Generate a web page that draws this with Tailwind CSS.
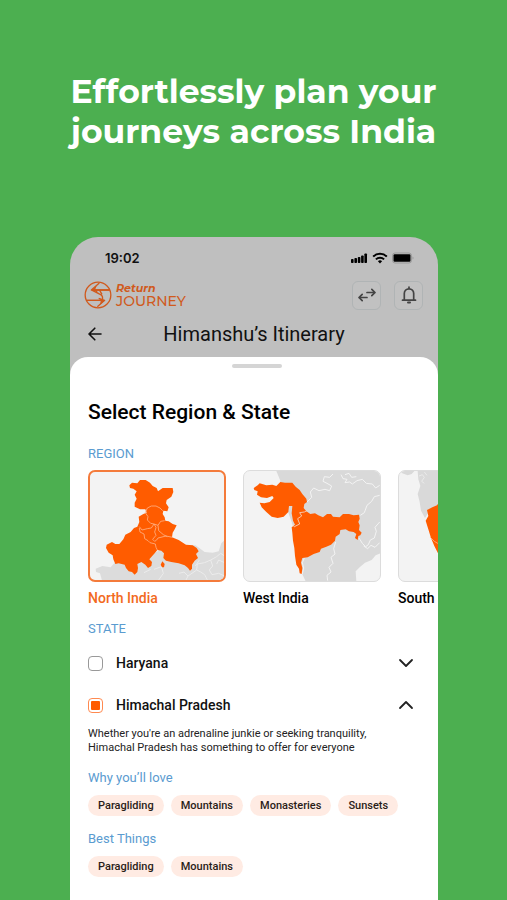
<!DOCTYPE html>
<html lang="en">
<head>
<meta charset="utf-8">
<meta name="viewport" content="width=device-width, initial-scale=1">
<title>Return Journey</title>
<script src="https://cdn.jsdelivr.net/npm/@tailwindcss/browser@4"></script>
</head>
<body class="bg-[#4caf50]">
<main class="flex h-screen min-h-[900px] flex-col overflow-hidden bg-[#4caf50] font-[Roboto,sans-serif] text-[#111]">
  <h1 class="pt-[71px] text-center font-[Montserrat,Inter,sans-serif] text-[33px] leading-10 font-bold text-white">Effortlessly plan your<br>journeys across India</h1>

  <section class="mr-[69px] ml-[70px] mt-[86px] flex flex-1 flex-col overflow-hidden rounded-t-[28px] bg-[#bfbfbf]">
    <div class="flex h-[42px] items-center justify-between pr-6 pl-[35px]">
      <time class="font-[Inter,sans-serif] text-[13px] leading-5 font-semibold">19:02</time>
      <div class="flex items-center gap-1">
        <svg class="h-3 w-[17px]" viewBox="0 0 17 12" aria-hidden="true"><rect x="0" y="7" width="2.6" height="4" rx=".8"/><rect x="3.4" y="6" width="2.6" height="5" rx=".8"/><rect x="6.8" y="5" width="2.6" height="6" rx=".8"/><rect x="10.1" y="3.5" width="2.6" height="7.5" rx=".8"/><rect x="13.4" y="1.5" width="2.6" height="9.5" rx=".8"/></svg>
        <svg class="h-3 w-4" viewBox="0 0 16 12" aria-hidden="true" fill="none" stroke="#000" stroke-width="2"><path d="M1.2 4.600a9.700 9.700 0 0 1 13.600 0M3.900 7.400a5.900 5.900 0 0 1 8.200 0"/><path d="M5.900 9.300a3.100 3.100 0 0 1 4.200 0L8 11.500z" fill="#000" stroke="none"/></svg>
        <svg class="h-3 w-[22px]" viewBox="0 0 22 12" aria-hidden="true"><rect x=".5" y="1" width="19" height="10" rx="2.600" fill="none" stroke="#999"/><rect x="1.500" y="2.300" width="17" height="7.400" rx="1.200"/><path d="M20.500 4.500v3q1-.4 1-1.500t-1-1.500" fill="#999"/></svg>
      </div>
    </div>

    <header class="flex h-8 items-center pr-[15px] pl-[14px]">
      <a href="#" aria-label="Return Journey" class="flex items-center gap-1 text-[#d05a1d]">
        <svg class="size-7" viewBox="0 0 84 84" fill="none" stroke="currentColor" stroke-width="4" stroke-linejoin="round" aria-hidden="true"><circle cx="42" cy="42" r="38.500"/><path d="M77 27H22L46 6M22 27L50 41Q58 46 55 57M7 58H62L40 77M62 58L44 52M47 28L54 40"/><path d="M22 27L38 14L34 25H77V29H38L44 36zM62 59L48 71L50 60H7V56H50L44 51z" fill="currentColor" stroke="none"/></svg>
        <span class="flex flex-col font-[Montserrat,sans-serif]"><span class="text-[11px] leading-[11px] font-bold italic">Return</span><span class="text-[14px] leading-[14px] font-medium">JOURNEY</span></span>
      </a>
      <div class="ml-auto flex gap-[13px] text-[#444]">
        <button type="button" aria-label="Swap" class="grid size-[29px] place-items-center rounded-md border border-[#b0b4b5] bg-[#c1c1c1]"><svg class="h-5 w-5" viewBox="0 0 20 20" fill="none" stroke="currentColor" stroke-width="1.700" stroke-linecap="round" stroke-linejoin="round" aria-hidden="true"><path d="M10 7.500h8M14.800 4.300L18 7.500L14.800 10.700M10 12.500H2M5.200 9.300L2 12.500L5.200 15.700"/></svg></button>
        <button type="button" aria-label="Notifications" class="grid size-[29px] place-items-center rounded-md border border-[#b0b4b5] bg-[#c1c1c1]"><svg class="h-5 w-5" viewBox="0 0 20 20" fill="none" stroke="currentColor" stroke-width="1.700" stroke-linecap="round" stroke-linejoin="round" aria-hidden="true"><path d="M3.500 15.200h13M5.300 15V8.500a4.700 4.700 0 0 1 9.400 0V15M10 3.500V2"/><path d="M9 17.500h2" stroke-width="2"/></svg></button>
      </div>
    </header>

    <div class="grid h-[46px] grid-cols-[1fr_auto_1fr] items-center pl-[18px] pr-[18px]">
      <button type="button" aria-label="Back"><svg class="h-4 w-[14px]" viewBox="0 0 14 16" fill="none" stroke="#111" stroke-width="1.600" stroke-linecap="round" stroke-linejoin="round" aria-hidden="true"><path d="M13 8H1.200M6.800 2.200L1 8L6.800 13.800"/></svg></button>
      <h2 class="text-[20px] leading-6">Himanshu’s Itinerary</h2>
    </div>

    <div class="flex flex-1 flex-col rounded-t-[18px] bg-white pt-[7px] pl-[18px]">
      <div class="-ml-3 flex justify-center"><span class="h-1 w-[50px] rounded-full bg-[#d5d5d5]"></span></div>
      <h3 class="mt-[30px] text-[21px] leading-7 font-medium text-black">Select Region &amp; State</h3>

      <h4 class="mt-5 text-[13px] leading-4 text-[#5a9bd0]">REGION</h4>
      <div class="mt-2 flex gap-[17px] overflow-hidden text-[14px] leading-5 font-medium text-black">
        <button type="button" aria-pressed="true" class="w-[138px] shrink-0 text-left text-[#f26a21]">
          <span class="block h-28 overflow-hidden rounded-[7px] border-2 border-[#f47b3b] bg-[#f3f3f3]">
            <svg class="h-full w-full" viewBox="18 18 402 324" aria-hidden="true" stroke-linejoin="round">
              <path fill="#dcdcdc" d="M35 308L55 300L80 304L92 290L150 280L210 262L250 240L334 238L346 246L362 258L386 260L404 256L412 232L422 222V344H54L48 322L36 318z"/>
              <path fill="none" stroke="#f3f3f3" stroke-width="2" d="M285 322L300 318L312 330L338 312L340 294L362 290L380 282L398 272L410 262L422 270M312 330L306 342M338 312L350 318L362 326L370 342M380 282L386 300L376 312L384 326L404 322L422 330M346 282L334 300M398 294L404 282L422 290M210 310L232 302L238 322L224 342M180 320L200 310"/>
              <path fill="#ff5c00" d="M136 58L144 50L160 52L168 42L185 42L198 50L206 60L218 66L222 76L236 66H266L268 78L262 92L248 102L246 112L254 124L250 136L238 134L236 144L242 154L244 164L254 166L266 174L278 178L272 190L266 200L264 214L284 222L306 236L326 238L338 246L344 256L336 264L342 276L332 284L324 296V308L318 314L312 306L302 298L284 292L262 288L246 284L238 276L240 262L232 254L220 252L212 262L196 280L204 288L202 300L192 306L184 296L172 288L160 294L162 306L160 318L152 326L144 318L134 316L126 306L122 296L104 292L94 294L88 280L86 268L74 260L66 246L68 236L84 228L94 234L106 234L118 220L124 206L140 198L150 186L160 182L166 168L164 152L178 144L188 140L184 130L168 130L152 122V110L158 98L152 86L158 76L148 68L138 66z"/>
              <path fill="#ff5c00" d="M235 286L242 294L240 304L234 304L230 296z"/>
              <path fill="none" stroke="#ffb183" stroke-width="2.500" d="M184 140L190 126L202 120L216 120L228 126L236 134M184 140L192 152L190 162L200 172L210 174L222 178L230 166L242 164M166 182L174 192L190 188L202 186L210 174L216 184L212 198L216 208L206 220L212 226L218 222L222 216L246 210L266 214M222 178L224 194L238 206L250 212M166 186L168 198L180 204L182 218L192 224L198 230L214 234L216 244L220 252"/>
            </svg>
          </span>
          <span class="mt-[6px] block">North India</span>
        </button>
        <button type="button" aria-pressed="false" class="w-[138px] shrink-0 text-left">
          <span class="block h-28 overflow-hidden rounded-[7px] border border-[#dcdcdc] bg-[#f3f3f3]">
            <svg class="h-full w-full" viewBox="15 15 408 330" aria-hidden="true" stroke-linejoin="round">
              <path fill="#d9d9d9" d="M112 15H424V262L410 268L398 282L378 290L362 304L350 316L352 346H200L188 320L176 220L120 60L124 44z"/>
              <path fill="none" stroke="#f3f3f3" stroke-width="3" d="M204 108L218 94L214 78L224 66L240 74L258 70L272 74L278 60L264 52L252 46L256 32L272 34L282 24M306 26L312 38L324 40L318 50L332 48L340 54L354 44L370 40L382 52L400 54L410 66L422 58M318 26L330 22L338 34L352 32M422 88L406 92L398 106L384 118L376 140L364 148M360 216L370 232L380 242L388 236L394 222L406 216L412 196L408 184L422 168M374 240L386 248L396 238L408 244L422 230M290 228L284 248L288 264L276 274L282 292L270 304L276 318L264 328L266 344M196 276L190 290L194 306L190 324"/>
              <path fill="#ff5c00" d="M44 66L56 58L62 52L82 58L100 56L112 60L124 48L138 50H160L170 62L182 72L190 84L202 98L204 108L196 114L194 126L202 136L214 144L228 142L238 148L252 154L264 144L276 144L282 152L302 154L312 144L330 144L344 148L360 146L362 158L358 168L362 178L360 192L368 200L364 208L358 210L356 222L348 216L352 204L344 198L330 196L320 190L304 192L302 204L290 212L288 224L276 236L262 242L246 248L242 258L224 264L206 274L190 276L186 290L190 306L188 324L182 322L180 308L172 296L168 270L166 246L162 224L160 200L158 184L168 176L162 164L158 142L160 120L150 120L148 138L134 152L116 156L98 152L82 138L68 124L62 110L76 112L92 108L104 96L100 90L84 96L66 94L54 86L56 76L46 72z"/>
              <path fill="none" stroke="#f7d9c8" stroke-width="2.500" d="M158 174L166 182L182 174L176 158L188 150L182 140L196 138L204 134"/>
            </svg>
          </span>
          <span class="mt-[6px] block">West India</span>
        </button>
        <button type="button" aria-pressed="false" class="w-[138px] shrink-0 text-left">
          <span class="block h-28 overflow-hidden rounded-[7px] border border-[#dcdcdc] bg-[#f3f3f3]">
            <svg class="h-full w-full" viewBox="42 15 408 330" aria-hidden="true" stroke-linejoin="round">
              <path fill="#d9d9d9" d="M44 15H88L80 24L68 28L52 22zM98 15H300V140H130L120 156L108 134L104 108L98 84L106 60L100 40z"/>
              <path fill="none" stroke="#f3f3f3" stroke-width="2" d="M102 30L112 26L118 34L110 46L118 52M118 18L126 28"/>
              <path fill="#ff5c00" d="M126 132L142 124L156 118L162 108L250 90L300 160L260 260L210 330L186 310L160 264L148 240L138 216L130 190L122 164L130 150z"/>
              <path fill="none" stroke="#ffb183" stroke-width="2.500" d="M136 214L148 226L158 232L170 240"/>
            </svg>
          </span>
          <span class="mt-[6px] block">South India</span>
        </button>
      </div>

      <h4 class="mt-[13px] text-[13px] leading-4 text-[#5a9bd0]">STATE</h4>
      <div class="mt-[14px] flex h-6 items-center pr-6">
        <input id="haryana" type="checkbox" class="size-[15px] appearance-none rounded-[4px] border border-[#999] bg-white">
        <label for="haryana" class="ml-[13px] flex-1 text-[14px] leading-6 font-medium">Haryana</label>
        <button type="button" aria-label="Expand Haryana"><svg class="h-4 w-4" viewBox="0 0 16 16" fill="none" stroke="#222" stroke-width="1.800" stroke-linecap="round" stroke-linejoin="round" aria-hidden="true"><path d="M2 5L8 11L14 5"/></svg></button>
      </div>
      <div class="mt-[18px] flex h-6 items-center pr-6">
        <input id="himachal" type="checkbox" checked class="grid size-[15px] appearance-none place-items-center rounded-[4px] border border-[#ff8a50] bg-white before:size-[9px] before:rounded-[1px] before:bg-[#ff5c00] before:content-['']">
        <label for="himachal" class="ml-[13px] flex-1 text-[14px] leading-6 font-medium">Himachal Pradesh</label>
        <button type="button" aria-label="Collapse Himachal Pradesh"><svg class="h-4 w-4" viewBox="0 0 16 16" fill="none" stroke="#222" stroke-width="1.800" stroke-linecap="round" stroke-linejoin="round" aria-hidden="true"><path d="M2 11L8 5L14 11"/></svg></button>
      </div>
      <p class="mt-[10px] text-[11px] leading-[14px] text-[#222]">Whether you're an adrenaline junkie or seeking tranquility,<br>Himachal Pradesh has something to offer for everyone</p>

      <h5 class="mt-[15px] text-[13px] leading-4 text-[#5a9bd0]">Why you’ll love</h5>
      <ul class="mt-[9px] flex gap-[7px] text-[11px] leading-[21px] font-medium text-[#2b1d18]">
        <li class="rounded-full bg-[#ffebe3] px-[10px]">Paragliding</li>
        <li class="rounded-full bg-[#ffebe3] px-[10px]">Mountains</li>
        <li class="rounded-full bg-[#ffebe3] px-[10px]">Monasteries</li>
        <li class="rounded-full bg-[#ffebe3] px-[10px]">Sunsets</li>
      </ul>
      <h5 class="mt-[15px] text-[13px] leading-4 text-[#5a9bd0]">Best Things</h5>
      <ul class="mt-[9px] flex gap-[7px] text-[11px] leading-[21px] font-medium text-[#2b1d18]">
        <li class="rounded-full bg-[#ffebe3] px-[10px]">Paragliding</li>
        <li class="rounded-full bg-[#ffebe3] px-[10px]">Mountains</li>
      </ul>
    </div>
  </section>
</main>
</body>
</html>
